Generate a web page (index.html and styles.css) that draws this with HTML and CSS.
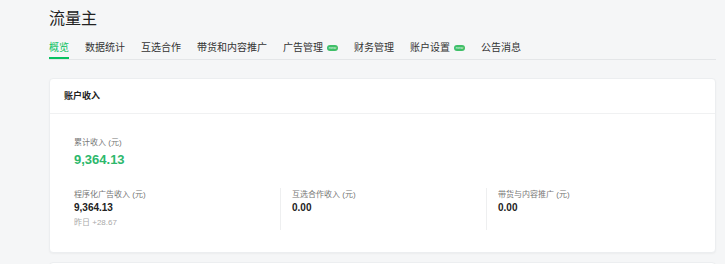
FILE: index.html
```html
<!DOCTYPE html>
<html lang="zh-CN">
<head>
<meta charset="utf-8">
<title>流量主</title>
<link rel="stylesheet" href="styles.css">
</head>
<body>
<div class="page">
  <h1 class="title">流量主</h1>
  <nav class="tabs">
    <span class="tab active">概览</span>
    <span class="tab">数据统计</span>
    <span class="tab">互选合作</span>
    <span class="tab">带货和内容推广</span>
    <span class="tab">广告管理<span class="badge">new</span></span>
    <span class="tab">财务管理</span>
    <span class="tab">账户设置<span class="badge">new</span></span>
    <span class="tab">公告消息</span>
  </nav>
  <section class="card">
    <div class="card-head">账户收入</div>
    <div class="card-body">
      <div class="total-label">累计收入 (元)</div>
      <div class="total-value">9,364.13</div>
      <div class="cols">
        <div class="col">
          <div class="col-label">程序化广告收入 (元)</div>
          <div class="col-value">9,364.13</div>
          <div class="col-sub">昨日 +28.67</div>
        </div>
        <div class="col sep">
          <div class="col-label">互选合作收入 (元)</div>
          <div class="col-value">0.00</div>
        </div>
        <div class="col sep">
          <div class="col-label">带货与内容推广 (元)</div>
          <div class="col-value">0.00</div>
        </div>
      </div>
    </div>
  </section>
  <section class="card card-next"></section>
</div>
</body>
</html>
```

FILE: styles.css
```css
html, body {
  margin: 0;
  padding: 0;
  background: #f5f6f7;
  overflow: hidden;
}
body {
  font-family: "Liberation Sans", "Noto Sans CJK SC", sans-serif;
  color: #333;
}
.page {
  padding: 8px 9px 0 49px;
}
.title {
  margin: 0;
  font-size: 16px;
  line-height: 22px;
  font-weight: normal;
  color: #222;
}
.tabs {
  margin-top: 8px;
  display: flex;
  gap: 16px;
  border-bottom: 1px solid #e4e6e8;
}
.tab {
  display: flex;
  align-items: center;
  font-size: 10px;
  line-height: 14px;
  padding: 3px 0 2px;
  border-bottom: 2px solid transparent;
  color: #333;
}
.tab.active {
  color: #07c160;
  border-bottom-color: #07c160;
}
.badge {
  display: inline-block;
  margin-left: 4px;
  width: 11px;
  height: 6px;
  border-radius: 3px;
  background: #3fbf68;
  color: #e9f9ee;
  font-size: 4px;
  line-height: 6px;
  text-align: center;
  overflow: hidden;
}
.card {
  margin-top: 18px;
  background: #fff;
  border: 1px solid #eceef0;
  border-radius: 4px;
  box-shadow: 0 1px 2px rgba(0, 0, 0, 0.04);
}
.card-head {
  height: 34px;
  line-height: 35px;
  padding-left: 14px;
  font-size: 9px;
  font-weight: bold;
  color: #222;
  border-bottom: 1px solid #f0f1f2;
}
.card-body {
  padding: 23px 23px 22px 24px;
}
.total-label {
  font-size: 8px;
  line-height: 12px;
  color: #777;
}
.total-value {
  margin-top: 2px;
  font-size: 13px;
  line-height: 18px;
  font-weight: bold;
  color: #2db86c;
}
.cols {
  margin-top: 19px;
  display: grid;
  grid-template-columns: 206px 206px 1fr;
}
.col {
  height: 42px;
}
.col.sep {
  border-left: 1px solid #eeeff0;
  padding-left: 11px;
}
.col-label {
  font-size: 8px;
  line-height: 12px;
  color: #777;
  margin-top: 1px;
}
.col-value {
  font-size: 10px;
  line-height: 14px;
  font-weight: bold;
  color: #222;
}
.col-sub {
  margin-top: 2px;
  font-size: 8px;
  line-height: 12px;
  color: #aaa;
}
.card-next {
  margin-top: 9px;
  height: 20px;
}
```
